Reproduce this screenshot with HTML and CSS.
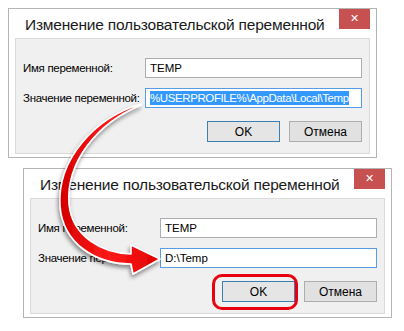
FILE: index.html
```html
<!DOCTYPE html>
<html lang="ru">
<head>
  <meta charset="UTF-8">
  <meta name="viewport" content="width=device-width,initial-scale=1.0">
  <title>Изменение пользовательской переменной</title>
  <link rel="stylesheet" href="styles.css">
</head>
<body>
  <div class="stage">
    <!-- до изменения -->
    <div class="dialog first">
      <div class="titlebar">
        <span class="title">Изменение пользовательской переменной</span>
        <span class="close">✕</span>
      </div>
      <div class="panel">
        <div class="form">
          <label>Имя переменной:</label>
          <div class="field">TEMP</div>
          <label>Значение переменной:</label>
          <div class="field focus"><span class="selected">%USERPROFILE%\AppData\Local\Temp</span></div>
        </div>
        <div class="buttons">
          <button class="btn default">OK</button>
          <button class="btn">Отмена</button>
        </div>
      </div>
    </div>

    <!-- после изменения -->
    <div class="dialog second">
      <div class="titlebar">
        <span class="title">Изменение пользовательской переменной</span>
        <span class="close">✕</span>
      </div>
      <div class="panel">
        <div class="form">
          <label>Имя переменной:</label>
          <div class="field">TEMP</div>
          <label>Значение переменной:</label>
          <div class="field focus">D:\Temp</div>
        </div>
        <div class="buttons">
          <button class="btn default marked">OK</button>
          <button class="btn">Отмена</button>
        </div>
      </div>
    </div>

    <!-- стрелка поверх окон -->
    <svg class="arrow" width="404" height="331" viewBox="0 0 404 331">
      <defs>
        <filter id="shadow" x="-20%" y="-20%" width="140%" height="140%">
          <feDropShadow dx="-1" dy="3" stdDeviation="2" flood-color="#000" flood-opacity="0.45"/>
        </filter>
        <linearGradient id="red" x1="0" y1="0" x2="1" y2="0">
          <stop offset="0" stop-color="#d40000"/>
          <stop offset="0.5" stop-color="#ff1a1a"/>
          <stop offset="1" stop-color="#e00000"/>
        </linearGradient>
      </defs>
      <path filter="url(#shadow)" fill="url(#red)" stroke="#fff" stroke-width="1.6" stroke-linejoin="round"
        d="M141,104 C94,118 57,160 60,206 C63,244 96,264 131,264 L133,274 L160,259 L131,245 L131,254 C101,253 72,236 69,204 C66,162 97,123 141,105 Z"/>
    </svg>
  </div>
</body>
</html>
```
FILE: styles.css
```css
body {
  margin: 0;
  background: #fff;
  font-family: 'Liberation Sans', Arial, sans-serif;
  color: #000;
}
.stage {
  position: relative;
  width: 404px;
  height: 331px;
  overflow: hidden;
}

.dialog {
  box-sizing: border-box;
  width: 369px;
  height: 150px;
  border: 1px solid #b4b4b4;
  background: #fff;
  padding: 0 6px 3px 6px;
  display: flex;
  flex-direction: column;
}
.dialog.first {
  margin: 8px 0 0 8px;
}
.dialog.second {
  margin: 10px 0 0 23px;
}

.titlebar {
  height: 29px;
  display: flex;
  justify-content: space-between;
  align-items: flex-start;
}
.title {
  padding: 4px 0 0 10px;
  font-size: 15.5px;
  letter-spacing: -0.2px;
  line-height: 24px;
  color: #1a1a1a;
  white-space: nowrap;
}
.close {
  flex-shrink: 0;
  width: 31px;
  height: 20px;
  background: #c75050;
  color: #fff;
  font-family: 'DejaVu Sans', sans-serif;
  font-size: 11px;
  font-weight: bold;
  line-height: 20px;
  text-align: center;
}

.panel {
  flex: 1;
  background: #f0f0f0;
  border: 1px solid #dadada;
  padding: 19px 7px 0 7px;
}
.form {
  display: grid;
  grid-template-columns: 122px 1fr;
  row-gap: 10px;
  align-items: center;
}
.form label {
  font-size: 11.5px;
  letter-spacing: -0.3px;
  line-height: 20px;
  white-space: nowrap;
}
.field {
  box-sizing: border-box;
  height: 20px;
  background: #fff;
  border: 1px solid #abadb3;
  padding: 0 4px;
  font-size: 11.5px;
  line-height: 18px;
  white-space: nowrap;
  overflow: hidden;
}
.field.focus {
  border-color: #569de5;
}
.selected {
  background: #3399ff;
  color: #fff;
  padding: 1px 0;
  letter-spacing: -0.4px;
}

.buttons {
  display: flex;
  justify-content: flex-end;
  gap: 9px;
  margin-top: 13px;
}
.btn {
  position: relative;
  box-sizing: border-box;
  width: 73px;
  height: 21px;
  background: #e1e1e1;
  border: 1px solid #adadad;
  font-family: 'Liberation Sans', Arial, sans-serif;
  font-size: 12px;
  color: #000;
  padding: 0;
}
.btn.default {
  border-color: #3c7fb1;
  background: #e5e5e5;
}
/* красная рамка вокруг кнопки */
.btn.marked::after {
  content: "";
  position: absolute;
  left: -11px;
  top: -8px;
  right: -4px;
  bottom: -9px;
  border: 3px solid #e8000d;
  border-radius: 10px;
}

.arrow {
  position: absolute;
  left: 0;
  top: 0;
  pointer-events: none;
}
```
